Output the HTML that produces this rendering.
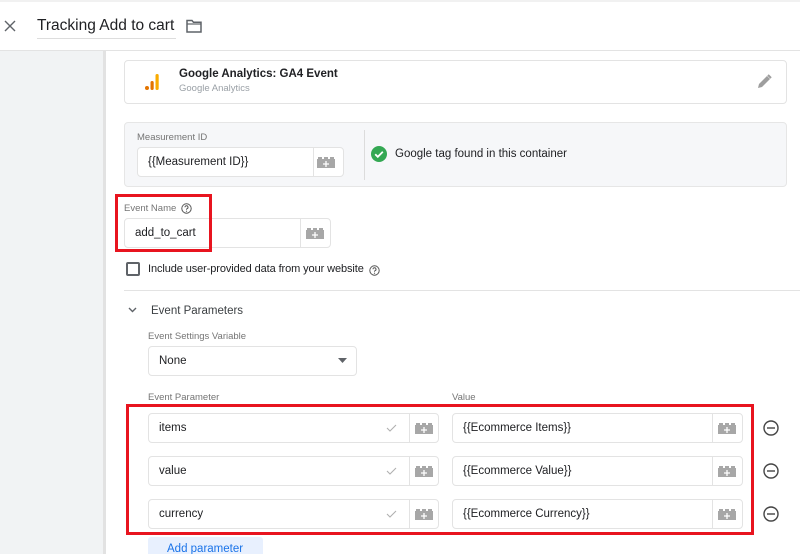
<!DOCTYPE html>
<html><head><meta charset="utf-8"><style>
*{box-sizing:border-box;margin:0;padding:0}
html,body{width:800px;height:554px;overflow:hidden}
body{background:#fff;font-family:"Liberation Sans",Arial,sans-serif;color:#202124;position:relative}
.a{position:absolute}
.inp{position:absolute;border:1px solid #e3e3e3;border-radius:4px;background:#fff;font-size:11.5px;color:#202124}
.inp .t{position:absolute;left:10px;top:50%;transform:translateY(-50%)}
.inp .d{position:absolute;top:0;bottom:0;border-left:1px solid #e3e3e3}
.lbl{position:absolute;font-size:9.5px;color:#757575}
.red{position:absolute;border:3px solid #e8141f}
</style></head><body>
<div class="a" style="left:0;top:0;width:800px;height:2px;background:#f1f1f1"></div>
<svg class="a" style="left:4px;top:20px" width="12" height="12" viewBox="0 0 12 12"><path d="M1 1L11 11M11 1L1 11" stroke="#5f6368" stroke-width="1.4"/></svg>
<div class="a" style="left:37px;top:17px;font-size:15.5px;color:#202124">Tracking Add to cart</div>
<div class="a" style="left:37px;top:38px;width:139px;height:1px;background:#ddd"></div>
<svg class="a" style="left:186px;top:19px" width="16" height="14" viewBox="0 0 16 14"><path d="M1 1.5h5l1.5 1.8H15V13H1z" fill="none" stroke="#5f6368" stroke-width="1.5"/><path d="M1 5h14" stroke="#5f6368" stroke-width="1.2"/></svg>
<div class="a" style="left:0;top:50px;width:800px;height:1px;background:#e3e3e3"></div>
<div class="a" style="left:0;top:51px;width:103px;height:503px;background:#f1f3f4"></div>
<div class="a" style="left:103px;top:51px;width:3px;height:503px;background:#e2e2e2"></div>
<div class="a" style="left:124px;top:60px;width:663px;height:44px;border:1px solid #e3e3e3;border-radius:4px"></div>
<svg class="a" style="left:144px;top:73px" width="16" height="18" viewBox="0 0 16 18"><circle cx="3" cy="15" r="2" fill="#e37400"/><rect x="6.5" y="8" width="3.2" height="9" rx="1.5" fill="#e37400"/><rect x="11.5" y="1" width="3.2" height="16" rx="1.5" fill="#f9ab00"/></svg>
<div class="a" style="left:179px;top:68px;font-size:11.5px;font-weight:bold;color:#202124">Google Analytics: GA4 Event</div>
<div class="a" style="left:179px;top:83px;font-size:9.5px;color:#9aa0a6">Google Analytics</div>
<svg class="a" style="left:757px;top:74px" width="15" height="15" viewBox="0 0 15 15"><path d="M1 14l1-4 8-8 3 3-8 8z" fill="#9e9e9e"/><path d="M11 1l3 3" stroke="#9e9e9e" stroke-width="2"/></svg>
<div class="a" style="left:124px;top:122px;width:663px;height:65px;border:1px solid #e6e6e6;border-radius:4px;background:#f6f7f9"></div>
<div class="lbl" style="left:137px;top:132px">Measurement ID</div>
<div class="inp" style="left:137px;top:147px;width:207px;height:30px"><span class="t">{{Measurement ID}}</span><div class="d" style="left:175px"></div></div>
<div class="a" style="left:364px;top:130px;width:1px;height:50px;background:#dcdcdc"></div>
<svg class="a" style="left:371px;top:146px" width="16" height="16" viewBox="0 0 16 16"><circle cx="8" cy="8" r="8" fill="#34a853"/><path d="M4.2 8.2l2.6 2.6 5-5" fill="none" stroke="#fff" stroke-width="1.8"/></svg>
<div class="a" style="left:395px;top:148px;font-size:11.5px;color:#202124">Google tag found in this container</div>
<div class="lbl" style="left:124px;top:203px">Event Name</div>
<svg class="a" style="left:181px;top:203px" width="11" height="11" viewBox="0 0 11 11"><circle cx="5.5" cy="5.5" r="4.7" fill="none" stroke="#555" stroke-width="1"/><path d="M4 4.3a1.5 1.5 0 1 1 2 1.4c-.5.2-.5.6-.5 1" fill="none" stroke="#555" stroke-width="1"/><circle cx="5.5" cy="8.2" r=".6" fill="#555"/></svg>
<div class="inp" style="left:124px;top:218px;width:207px;height:30px"><span class="t">add_to_cart</span><div class="d" style="left:175px"></div></div>
<div class="red" style="left:115px;top:194px;width:97px;height:58px"></div>
<div class="a" style="left:126px;top:262px;width:14px;height:14px;border:2px solid #5f6368;border-radius:2px"></div>
<div class="a" style="left:148px;top:263px;font-size:11px;color:#202124;letter-spacing:-0.1px">Include user-provided data from your website</div>
<svg class="a" style="left:369px;top:265px" width="11" height="11" viewBox="0 0 11 11"><circle cx="5.5" cy="5.5" r="4.7" fill="none" stroke="#555" stroke-width="1"/><path d="M4 4.3a1.5 1.5 0 1 1 2 1.4c-.5.2-.5.6-.5 1" fill="none" stroke="#555" stroke-width="1"/><circle cx="5.5" cy="8.2" r=".6" fill="#555"/></svg>
<div class="a" style="left:124px;top:290px;width:676px;height:1px;background:#e3e3e3"></div>
<svg class="a" style="left:128px;top:307px" width="9" height="6" viewBox="0 0 9 6"><path d="M1 1l3.5 3.5L8 1" fill="none" stroke="#5f6368" stroke-width="1.4"/></svg>
<div class="a" style="left:151px;top:305px;font-size:11.5px;color:#3c4043">Event Parameters</div>
<div class="lbl" style="left:148px;top:331px">Event Settings Variable</div>
<div class="inp" style="left:148px;top:346px;width:209px;height:30px"><span class="t">None</span></div>
<svg class="a" style="left:338px;top:358px" width="9" height="5" viewBox="0 0 9 5"><path d="M0 0h9L4.5 5z" fill="#5f6368"/></svg>
<div class="lbl" style="left:148px;top:392px">Event Parameter</div>
<div class="lbl" style="left:452px;top:392px">Value</div>
<div class="inp" style="left:148px;top:413px;width:291px;height:30px"><span class="t">items</span><div class="d" style="left:260px"></div></div>
<div class="inp" style="left:148px;top:456px;width:291px;height:30px"><span class="t">value</span><div class="d" style="left:260px"></div></div>
<div class="inp" style="left:148px;top:499px;width:291px;height:30px"><span class="t">currency</span><div class="d" style="left:260px"></div></div>
<div class="inp" style="left:452px;top:413px;width:291px;height:30px"><span class="t">{{Ecommerce Items}}</span><div class="d" style="left:259px"></div></div>
<div class="inp" style="left:452px;top:456px;width:291px;height:30px"><span class="t">{{Ecommerce Value}}</span><div class="d" style="left:259px"></div></div>
<div class="inp" style="left:452px;top:499px;width:291px;height:30px"><span class="t">{{Ecommerce Currency}}</span><div class="d" style="left:259px"></div></div>
<svg class="a" style="left:0;top:0" width="800" height="554">
<defs><g id="b"><rect x="0" y="2" width="18" height="9" fill="#a7a7a7"/><rect x="1" y="0" width="4" height="3" fill="#a7a7a7"/><rect x="7" y="0" width="4" height="3" fill="#a7a7a7"/><rect x="13" y="0" width="4" height="3" fill="#a7a7a7"/><path d="M9 4v6M6 7h6" stroke="#fff" stroke-width="1.3"/></g>
<g id="c"><path d="M0 4l3 3 6-6" fill="none" stroke="#b0b0b0" stroke-width="1.1"/></g>
<g id="m"><circle cx="0" cy="0" r="7" fill="none" stroke="#444" stroke-width="1.4"/><path d="M-4 0h8" stroke="#444" stroke-width="1.4"/></g></defs>
<use href="#b" x="317" y="157"/><use href="#b" x="306" y="228"/>
<use href="#c" x="387" y="424"/><use href="#c" x="387" y="467"/><use href="#c" x="387" y="510"/>
<use href="#b" x="415" y="423"/><use href="#b" x="415" y="466"/><use href="#b" x="415" y="509"/>
<use href="#b" x="718" y="423"/><use href="#b" x="718" y="466"/><use href="#b" x="718" y="509"/>
<use href="#m" x="771" y="428"/><use href="#m" x="771" y="471"/><use href="#m" x="771" y="514"/>
</svg>
<div class="red" style="left:126px;top:404px;width:628px;height:131px"></div>
<div class="a" style="left:148px;top:537px;width:115px;height:17px;overflow:hidden;background:#e8f0fe;border-radius:3px 3px 0 0;color:#1a73e8;font-size:11.5px;padding:6px 0 0 19px">Add parameter</div>
</body></html>
